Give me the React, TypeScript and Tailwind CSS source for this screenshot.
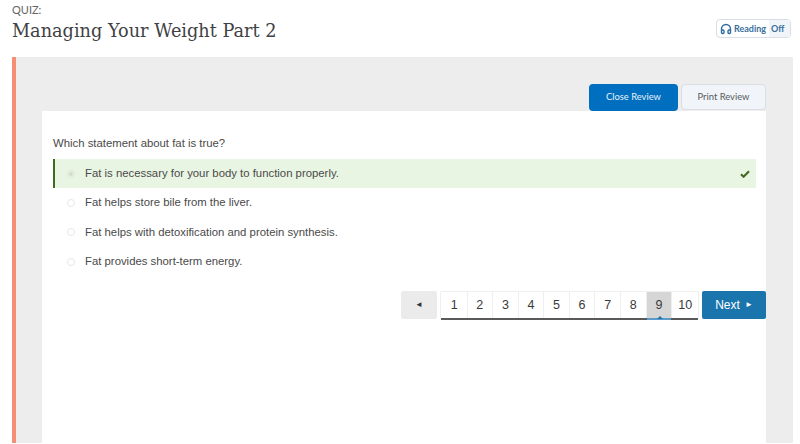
import { Headphones } from "lucide-react";

const answers = [
  "Fat is necessary for your body to function properly.",
  "Fat helps store bile from the liver.",
  "Fat helps with detoxification and protein synthesis.",
  "Fat provides short-term energy.",
];

const pages = [1, 2, 3, 4, 5, 6, 7, 8, 9, 10];

function Pager() {
  return (
    <div className="mt-[14px] flex h-7 justify-end font-['Liberation_Sans',sans-serif] text-[#3a3a3a]">
      <button className="flex h-7 w-[36px] items-center justify-center rounded-[2px] bg-[#ebebeb]">
        <span className="text-[8px] leading-none text-[#333]">◄</span>
      </button>
      <div className="relative ml-[3px] flex h-7 w-[259px] rounded-t-[2px] border border-b-0 border-[#efefef] pl-[1px] after:absolute after:inset-x-0 after:bottom-[-1px] after:h-[2px] after:bg-[#5a5a5a] after:content-['']">
        {pages.map((p) => (
          <div
            key={p}
            className={
              p === 9
                ? "relative flex w-[26px] items-center justify-center border-r border-[#efefef] bg-[#d6d6d6] text-[12.5px]"
                : "flex w-[25.6px] items-center justify-center border-r border-[#efefef] text-[12.5px] last:border-r-0"
            }
          >
            {p}
            {p === 9 && (
              <span className="absolute bottom-[-1px] left-0 z-10 h-[2px] w-full bg-[#5b9bc9]" />
            )}
            {p === 9 && (
              <span className="absolute bottom-0 left-[10px] z-10 h-0 w-0 border-x-[3px] border-b-[3px] border-x-transparent border-b-[#1f76b0]" />
            )}
          </div>
        ))}
      </div>
      <button className="ml-[3px] flex h-7 w-[64px] items-center justify-center gap-[5px] rounded-[2px] bg-[#1b75ad] text-[12px] text-white">
        Next<span className="text-[8px] leading-none">►</span>
      </button>
    </div>
  );
}

export default function App() {
  return (
    <div className="h-[444px] w-[800px] overflow-hidden bg-white">
      <header className="flex h-[57px] items-start justify-between pl-3 pr-[9px]">
        <div>
          <p className="pt-[3px] font-['Lato',sans-serif] text-[11px] leading-[14px] text-[#666]">QUIZ:</p>
          <h1 className="mt-[2px] font-['DejaVu_Serif',serif] text-[17.7px] leading-[24px] text-[#3f4244]">
            Managing Your Weight Part 2
          </h1>
        </div>
        <div className="mt-[19px] flex h-[19px] w-[75px] overflow-hidden rounded-[4px] border border-[#d8dee4] font-['Lato',sans-serif] text-[9px] font-bold text-[#3a6f9e]">
          <div className="flex flex-1 items-center gap-[2px] pl-[3px]">
            <Headphones size={12} strokeWidth={2.75} className="text-[#2d6a9f]" />
            Reading
          </div>
          <div className="flex w-[21px] items-center bg-[#f1f5f9] pl-[2px]">Off</div>
        </div>
      </header>

      <main className="ml-3 mr-[7px] h-[386px] border-l-4 border-[#f58e73] bg-[#ededed] pl-[26px] pr-[27px] pt-[27px]">
        <div className="flex justify-end gap-[3px] font-['Lato',sans-serif] text-[9.4px]">
          <button className="h-[27px] w-[89px] rounded-[4px] bg-[#006fbf] text-[#e8f2fa]">Close Review</button>
          <button className="h-[26px] w-[85px] rounded-[4px] border border-[#d8dee4] bg-[#f1f5f9] text-[#565a5c]">
            Print Review
          </button>
        </div>

        <section className="h-[332px] bg-white pl-[11px] pt-[24px] font-['Liberation_Sans',sans-serif] text-[11.35px] text-[#4a4a4a]">
          <p className="leading-[16px]">Which statement about fat is true?</p>
          <ul className="mr-[10px] mt-[8px]">
            {answers.map((a, i) => (
              <li
                key={a}
                className={
                  i === 0
                    ? "flex h-[29px] items-center border-l-2 border-[#41691f] bg-[#e9f5e3] pl-[12px] pr-[6px]"
                    : "flex h-[29.5px] items-center pl-[14px] pr-[6px]"
                }
              >
                <span
                  className={
                    i === 0
                      ? "flex h-2 w-2 items-center justify-center rounded-full border border-[#dfe8da]"
                      : "h-2 w-2 rounded-full border border-[#e8e8e8]"
                  }
                >
                  {i === 0 && <span className="h-1 w-1 rounded-full bg-[#d2dccd]" />}
                </span>
                <span className="ml-[10px] flex-1">{a}</span>
                {i === 0 && (
                  <svg width="10" height="8" viewBox="0 0 10 8" fill="none">
                    <path d="M1 4.2 3.6 6.8 9 1.2" stroke="#41691f" strokeWidth="2" />
                  </svg>
                )}
              </li>
            ))}
          </ul>
          <Pager />
        </section>
      </main>
    </div>
  );
}
